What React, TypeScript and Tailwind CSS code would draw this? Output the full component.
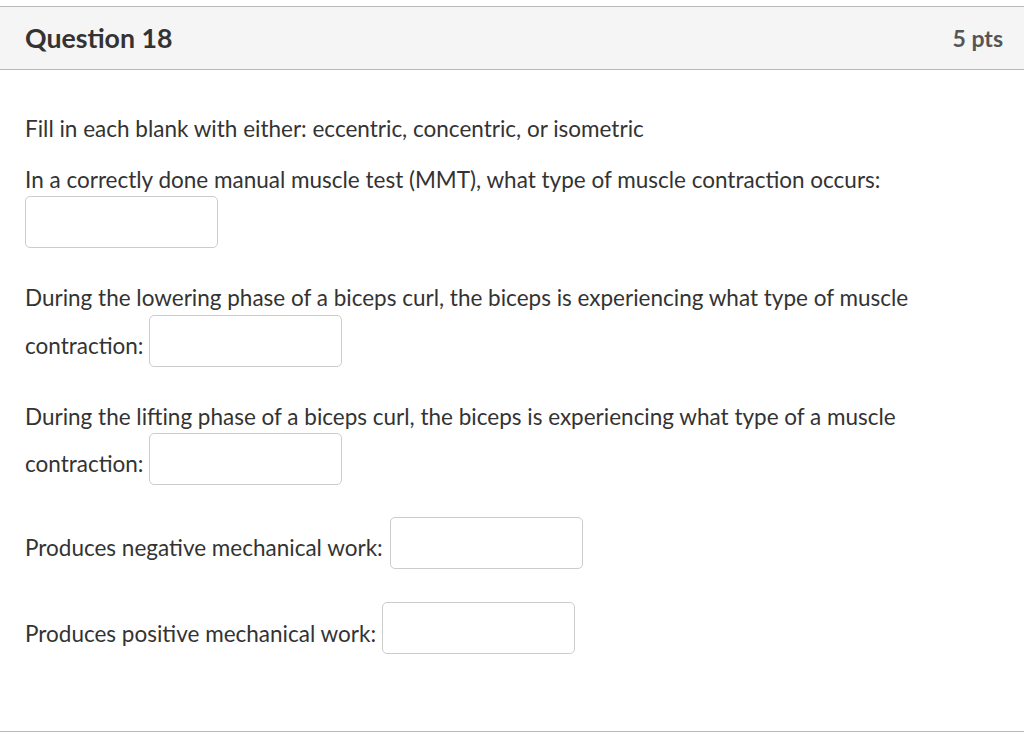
import React from 'react';

const Blank: React.FC = () => (
  <span className="inline-block h-[52px] w-[193px] shrink-0 rounded-[5px] border border-[#cccccc] bg-white" />
);

const App: React.FC = () => {
  return (
    <div className="h-[734px] w-[1024px] bg-white pt-[6px] font-['Lato',sans-serif] text-[#333333]">
      <div className="border-y border-[#b8b8b8]">
        {/* Header */}
        <div className="flex h-[62px] items-center justify-between bg-[#f5f5f5] px-[25px] pr-[21px]">
          <h2 className="text-[26.7px] font-bold leading-none text-[#333333]">Question 18</h2>
          <span className="text-[23px] font-bold leading-none text-[#555]">5 pts</span>
        </div>
      </div>

      {/* Body */}
      <div className="flex h-[662px] flex-col border-b border-[#b8b8b8] px-[25px] pt-[44px] text-[22.5px] leading-[30px]">
        <p>Fill in each blank with either: eccentric, concentric, or isometric</p>

        <p className="mt-[21px]">
          In a correctly done manual muscle test (MMT), what type of muscle contraction occurs:
        </p>
        <div className="mt-[1px] flex">
          <Blank />
        </div>

        <p className="mt-[35px]">
          During the lowering phase of a biceps curl, the biceps is experiencing what type of muscle
        </p>
        <div className="mt-[2px] flex h-[52px] items-center gap-[5px]">
          <span className="pt-[10px]">contraction:</span>
          <Blank />
        </div>

        <p className="mt-[35px]">
          During the lifting phase of a biceps curl, the biceps is experiencing what type of a muscle
        </p>
        <div className="mt-[1px] flex h-[52px] items-center gap-[5px]">
          <span className="pt-[10px]">contraction:</span>
          <Blank />
        </div>

        <div className="mt-[31px] flex h-[53px] items-center gap-[7px]">
          <span className="pt-[11px]">Produces negative mechanical work:</span>
          <Blank />
        </div>

        <div className="mt-[33px] flex h-[52px] items-center gap-[6px]">
          <span className="pt-[12px]">Produces positive mechanical work:</span>
          <Blank />
        </div>
      </div>
    </div>
  );
};

export default App;
